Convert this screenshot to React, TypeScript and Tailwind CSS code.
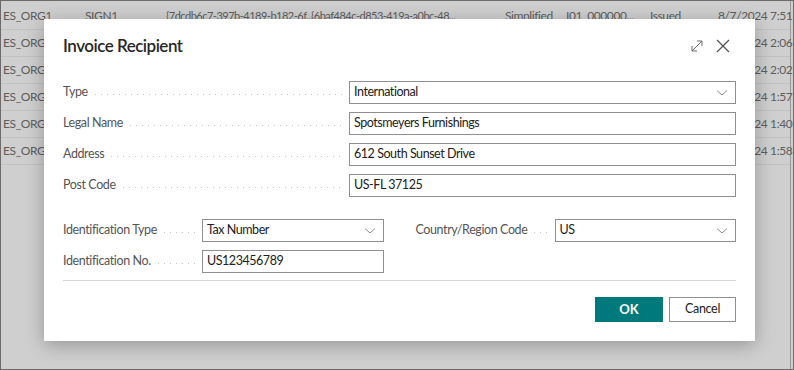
const font = "font-['Lato',sans-serif]";

const times = ['8/7/2024 7:51', '8/7/2024 2:06', '8/7/2024 2:02', '8/7/2024 1:57', '8/7/2024 1:40', '8/7/2024 1:58'];

const Chevron = () => (
  <svg width="12" height="8" viewBox="0 0 12 8" className="shrink-0">
    <polyline points="1,1.5 6,6 11,1.5" fill="none" stroke="#8a8a8a" strokeWidth="1" />
  </svg>
);

const Dots = () => (
  <div className="flex-1 ml-[7px] mr-[6px] h-px self-center mt-[3px] bg-[linear-gradient(to_right,#c4c4c4_1px,transparent_1px)] bg-[length:6px_1px] bg-repeat-x" />
);

const Field = ({ label, value, select, labelW }: { label: string; value: string; select?: boolean; labelW: string }) => (
  <div className="flex items-center h-[23px]">
    <div className={`flex items-center ${labelW} shrink-0`}>
      <span className="text-[12.5px] tracking-[-0.4px] text-[#555] whitespace-nowrap">{label}</span>
      <Dots />
    </div>
    <div className="flex-1 h-[23px] border border-[#8f8f8f] bg-white flex items-center pl-[4px] pr-[7px]">
      <span className="flex-1 text-[12.5px] tracking-[-0.45px] text-[#212121] whitespace-nowrap">{value}</span>
      {select && <Chevron />}
    </div>
  </div>
);

export default function App() {
  return (
    <div className={`${font} relative w-[794px] h-[370px] overflow-hidden border border-[#6b6b6b] bg-[#cfcfcf]`}>
      {/* dimmed list behind the dialog */}
      <div className="flex flex-col pt-[2px] border-r border-[#9a9a9a] mr-[2px] h-full text-[12px] tracking-[-0.4px] text-[#5e5e5e] whitespace-nowrap">
        {times.map((t, i) => (
          <div key={i} className="flex items-center h-[27px] border-b border-[#c2c2c2]">
            <span className="w-[84px] shrink-0 pl-[2px]">ES_ORG1</span>
            <span className="w-[81px] shrink-0">SIGN1</span>
            <span className="w-[145px] shrink-0 text-[11px] tracking-[-0.5px]">{'{7dcdb6c7-397b-4189-b182-6f...'}</span>
            <span className="w-[194px] shrink-0 text-[11px] tracking-[-0.5px]">{'{6baf484c-d853-419a-a0bc-48...'}</span>
            <span className="w-[61px] shrink-0">Simplified</span>
            <span className="w-[84px] shrink-0">I01_000000...</span>
            <span className="w-[68px] shrink-0">Issued</span>
            <span className="flex-1 text-right">{t}</span>
          </div>
        ))}
      </div>

      {/* dialog */}
      <div className="absolute left-[43px] top-[18px] w-[711px] h-[322px] bg-white shadow-[0_4px_18px_rgba(0,0,0,0.28)] flex flex-col px-[19px]">
        <div className="flex items-center justify-between h-[54px]">
          <h1 className="text-[17px] tracking-[-0.5px] text-[#262626] font-semibold">Invoice Recipient</h1>
          <div className="flex items-center gap-[12px] pr-[6px]">
            <svg width="14" height="14" viewBox="0 0 14 14">
              <g fill="none" stroke="#6a6a6a" strokeWidth="1">
                <line x1="2" y1="12" x2="12" y2="2" />
                <polyline points="7,2 12,2 12,7" />
                <polyline points="2,7 2,12 7,12" />
              </g>
            </svg>
            <svg width="14" height="14" viewBox="0 0 14 14">
              <g stroke="#555" strokeWidth="1.3">
                <line x1="1" y1="1" x2="13" y2="13" />
                <line x1="13" y1="1" x2="1" y2="13" />
              </g>
            </svg>
          </div>
        </div>

        <div className="flex flex-col gap-[8px] mt-[8px]">
          <Field label="Type" value="International" select labelW="w-[286px]" />
          <Field label="Legal Name" value="Spotsmeyers Furnishings" labelW="w-[286px]" />
          <Field label="Address" value="612 South Sunset Drive" labelW="w-[286px]" />
          <Field label="Post Code" value="US-FL 37125" labelW="w-[286px]" />
        </div>

        <div className="grid grid-cols-2 gap-x-[32px] mt-[22px]">
          <div className="flex flex-col gap-[8px]">
            <Field label="Identification Type" value="Tax Number" select labelW="w-[139px]" />
            <Field label="Identification No." value="US123456789" labelW="w-[139px]" />
          </div>
          <div className="flex flex-col gap-[8px]">
            <Field label="Country/Region Code" value="US" select labelW="w-[139px]" />
          </div>
        </div>

        <div className="mt-[7px] border-t border-[#d6d6d6]" />

        <div className="flex justify-end gap-[6px] mt-[16px]">
          <button className="w-[68px] h-[25px] bg-[#00797c] text-white text-[13px] font-bold">OK</button>
          <button className="w-[67px] h-[25px] bg-white border border-[#8f8f8f] text-[#212121] text-[12.5px] tracking-[-0.3px]">Cancel</button>
        </div>
      </div>
    </div>
  );
}
